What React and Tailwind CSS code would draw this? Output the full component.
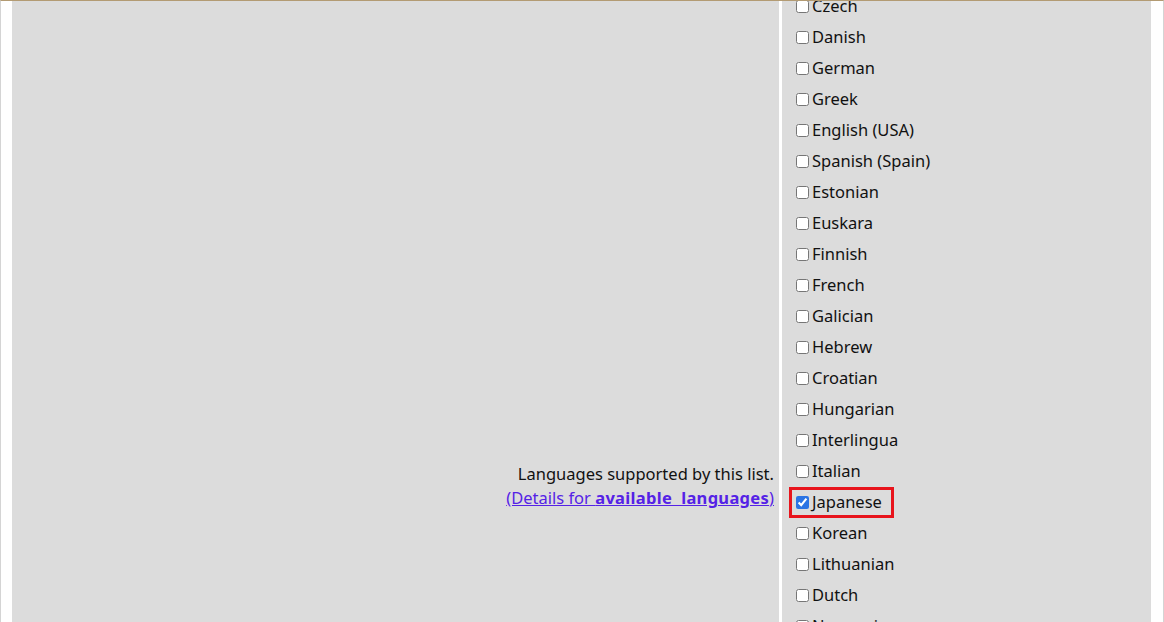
import { useState } from "react";

const languages = [
  "Czech",
  "Danish",
  "German",
  "Greek",
  "English (USA)",
  "Spanish (Spain)",
  "Estonian",
  "Euskara",
  "Finnish",
  "French",
  "Galician",
  "Hebrew",
  "Croatian",
  "Hungarian",
  "Interlingua",
  "Italian",
  "Japanese",
  "Korean",
  "Lithuanian",
  "Dutch",
  "Norwegian",
  "Polish",
];

function LanguageRow({ name, checked, onToggle, highlight }) {
  return (
    <div className="relative h-[31px] flex items-center">
      <label className="flex items-center cursor-pointer">
        <input
          type="checkbox"
          checked={checked}
          onChange={onToggle}
          className="m-0 ml-[4px] mr-[3px] w-[13px] h-[13px] accent-[#2b74e4]"
        />
        <span>{name}</span>
      </label>
      {highlight && (
        <span className="absolute left-[-3px] top-0 w-[105px] h-[31px] border-[3px] border-[#e8141c] pointer-events-none" />
      )}
    </div>
  );
}

export default function App() {
  const [selected, setSelected] = useState({ Japanese: true });

  const toggle = (name) => {
    setSelected((prev) => ({ ...prev, [name]: !prev[name] }));
  };

  return (
    <div
      className="h-[622px] overflow-hidden bg-white border-t border-t-[#b39b73] border-x border-x-[#d4d4d4] text-[16.5px] text-[#111]"
      style={{ fontFamily: '"Noto Sans", "Liberation Sans", sans-serif' }}
    >
      <div className="flex h-full pl-[11px] pr-[12px] gap-[3px]">
        <div className="w-[767px] shrink-0 bg-[#dcdcdc] pt-[461px] pr-[5px] text-right leading-[24px]">
          <div>Languages supported by this list.</div>
          <div>
            <a href="#" className="text-[#5522e6] underline">
              (Details for <b className="tracking-[0.3px]">available&nbsp; languages</b>)
            </a>
          </div>
        </div>
        <div className="w-[369px] shrink-0 bg-[#dcdcdc] pl-[10px] overflow-hidden">
          <div className="-mt-[10px]">
            {languages.map((name) => (
              <LanguageRow
                key={name}
                name={name}
                checked={!!selected[name]}
                onToggle={() => toggle(name)}
                highlight={name === "Japanese"}
              />
            ))}
          </div>
        </div>
      </div>
    </div>
  );
}
